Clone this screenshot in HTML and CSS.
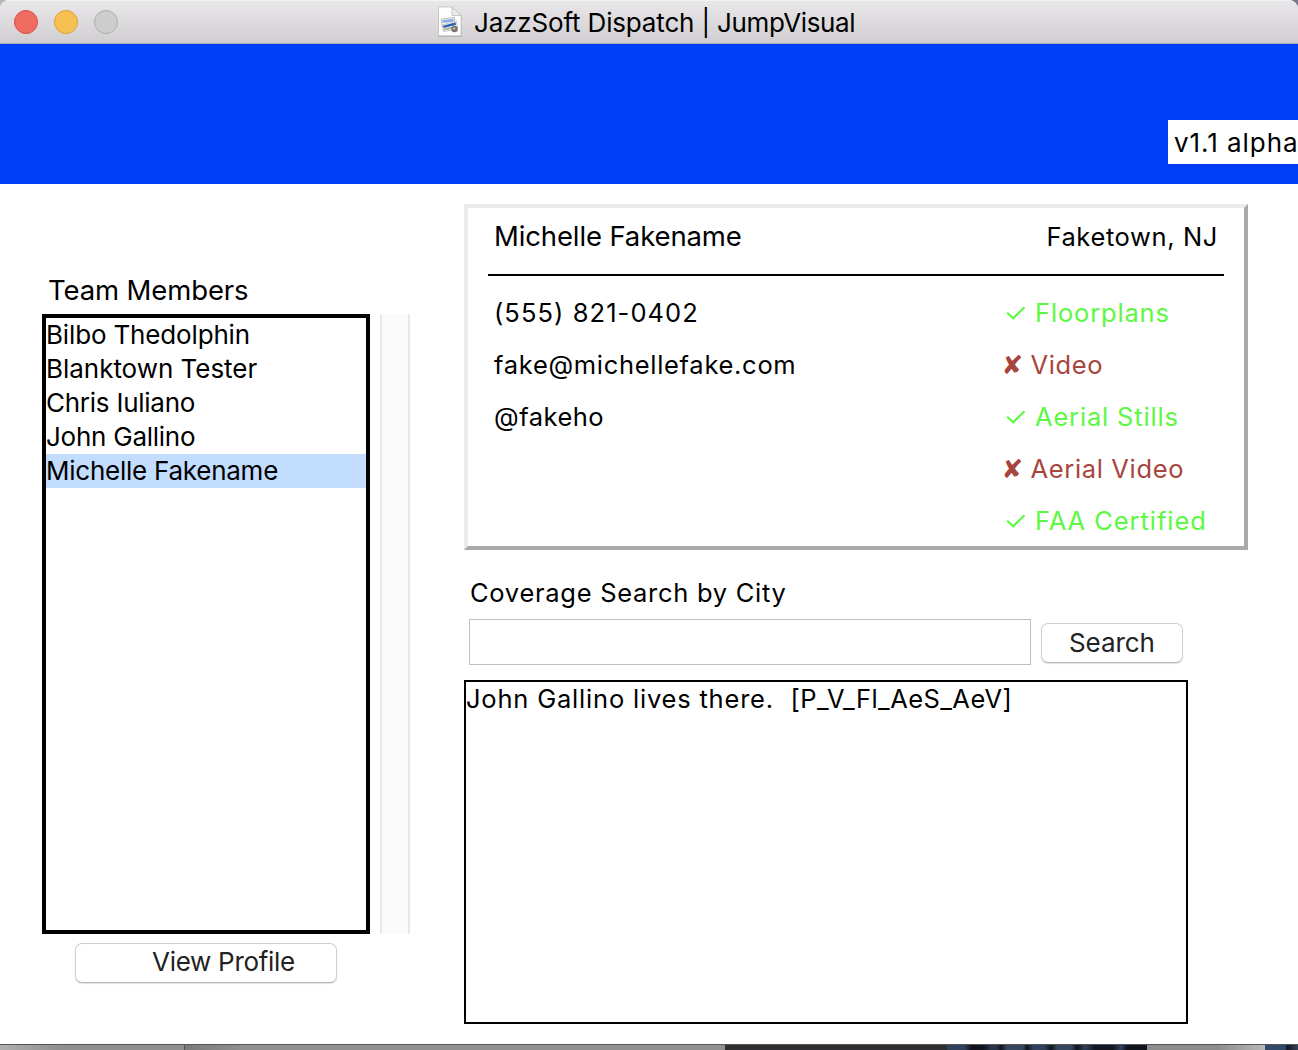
FILE: index.html
```html
<!DOCTYPE html>
<html lang="en">
<head>
<meta charset="utf-8">
<title>JazzSoft Dispatch | JumpVisual</title>
<link rel="stylesheet" href="styles.css">
</head>
<body>
<div class="window">
  <header class="titlebar">
    <div class="lights">
      <span class="light light-close"></span>
      <span class="light light-min"></span>
      <span class="light light-off"></span>
    </div>
    <svg class="doc-icon" width="26" height="32" viewBox="0 0 26 32">
      <path d="M1 1.500H15.500L24.500 10V31H1Z" fill="#a4a4a6" opacity=".7"/>
      <path d="M1.500 1H15L24 9.500V29.800H1.500Z" fill="#fdfdfd" stroke="#c0c0c2" stroke-width=".8"/>
      <path d="M15 1V9.500H24Z" fill="#ececec" stroke="#bdbdbf" stroke-width=".8"/>
      <path d="M4.500 13L17.500 11.500V19L5 21Z" fill="#fff" stroke="#aaa89e" stroke-width=".8"/>
      <path d="M5.500 14L16.500 12.700V15.500L5.500 17Z" fill="#8bb0e8"/>
      <path d="M5 19L19.500 15L20.500 23L6.500 25.500Z" fill="#fff" stroke="#b5b09b" stroke-width=".7"/>
      <path d="M6 19.700L18.700 16.200L19 19L6.500 22Z" fill="#2f62b5"/>
      <path d="M6.700 22.300L15 20.800V23L7 24.500Z" fill="#aeb6a6"/>
      <circle cx="17.500" cy="23" r="3.200" fill="#77716d"/>
      <circle cx="17.200" cy="22.500" r="1.300" fill="#b9b4b0"/>
    </svg>
    <h1 class="title">JazzSoft Dispatch | <span class="product">JumpVisual</span></h1>
  </header>
  <div class="banner"><div class="version">v1.1 alpha</div></div>
  <main class="content">
    <section class="sidebar">
      <h2 class="list-label">Team Members</h2>
      <div class="list-row">
        <ul class="members">
          <li class="member ls-a">Bilbo Thedolphin</li>
          <li class="member ls-b">Blanktown Tester</li>
          <li class="member">Chris Iuliano</li>
          <li class="member">John Gallino</li>
          <li class="member selected">Michelle Fakename</li>
        </ul>
        <div class="scrollbar"></div>
      </div>
      <button class="button view-button">View Profile</button>
    </section>
    <section class="details">
      <article class="card">
        <div class="card-head">
          <span class="name">Michelle Fakename</span>
          <span class="town">Faketown, NJ</span>
        </div>
        <div class="card-body">
          <div class="contact">
            <span class="phone">(555) 821-0402</span>
            <span class="email">fake@michellefake.com</span>
            <span class="handle">@fakeho</span>
          </div>
          <div class="skills">
            <div class="skill yes"><svg class="check" width="20" height="14" viewBox="0 0 20 14"><path d="M1.200 6.700L7.200 12.300L18.500 1.200"/></svg><span>Floorplans</span></div>
            <div class="skill no"><span class="cross">✘</span><span>Video</span></div>
            <div class="skill yes"><svg class="check" width="20" height="14" viewBox="0 0 20 14"><path d="M1.200 6.700L7.200 12.300L18.500 1.200"/></svg><span>Aerial Stills</span></div>
            <div class="skill no"><span class="cross">✘</span><span>Aerial Video</span></div>
            <div class="skill yes wide"><svg class="check" width="20" height="14" viewBox="0 0 20 14"><path d="M1.200 6.700L7.200 12.300L18.500 1.200"/></svg><span>FAA Certified</span></div>
          </div>
        </div>
      </article>
      <label class="search-label" for="city">Coverage Search by City</label>
      <div class="search-row">
        <input class="search-input" id="city" type="text">
        <button class="button search-button">Search</button>
      </div>
      <div class="results"><span>John Gallino lives there.</span><span class="codes">[P_V_Fl_AeS_AeV]</span></div>
    </section>
  </main>
</div>
<div class="desktop">
  <div class="pane pane-left"></div>
  <div class="pane pane-mid"></div>
  <div class="pane pane-dark"></div>
  <div class="pane pane-photo"></div>
  <div class="pane pane-right"></div>
  <div class="pane pane-edge"></div>
</div>
</body>
</html>
```

FILE: styles.css
```css
* { box-sizing: border-box; }
body {
  margin: 0;
  width: 1298px;
  height: 1050px;
  overflow: hidden;
  background: linear-gradient(90deg, #b9b9b9 50%, #77768c 50%);
  font-family: Inter, "Liberation Sans", sans-serif;
  font-size: 25.5px;
  letter-spacing: 0.75px;
  color: #000;
}
h1, h2, ul { margin: 0; padding: 0; font-weight: 400; }

.window {
  height: 1044px;
  border-radius: 9px 9px 0 0;
  background: #fff;
  overflow: hidden;
}
.titlebar {
  display: flex;
  height: 44px;
  padding-left: 14px;
  border-top: 1px solid #f4f3f4;
  border-bottom: 1px solid #aeacae;
  background: linear-gradient(#e9e7e9, #d0ced0);
}
.lights { display: flex; gap: 16px; width: 423px; padding-top: 9px; }
.light { width: 24px; height: 24px; border: 1px solid; border-radius: 50%; }
.light-close { background: #ef6c60; border-color: #dc4b45; }
.light-min { background: #f6c151; border-color: #dfa035; }
.light-off { background: #cdcdcd; border-color: #aeaeae; }
.doc-icon { margin-top: 5px; }
.title {
  padding-left: 11px;
  font-size: 26px;
  line-height: 44px;
  letter-spacing: -0.16px;
  white-space: nowrap;
}
.product { letter-spacing: -0.38px; }

.banner {
  display: flex;
  justify-content: flex-end;
  height: 140px;
  padding-top: 76px;
  background: #003ef8;
}
.version {
  width: 130px;
  height: 44px;
  padding-left: 6px;
  background: #fff;
  font-size: 26px;
  line-height: 46px;
  letter-spacing: 0.95px;
  white-space: nowrap;
}

.content { display: flex; height: 860px; padding-left: 42px; }
.sidebar { width: 422px; padding-top: 82px; }
.list-label {
  height: 48px;
  padding-left: 6px;
  font-size: 27.5px;
  line-height: 48px;
  letter-spacing: -0.12px;
}
.list-row { display: flex; gap: 10px; height: 620px; }
.members {
  width: 328px;
  border: 4px solid #000;
  list-style: none;
  font-size: 26px;
  line-height: 34px;
  letter-spacing: -0.25px;
}
.member { height: 34px; }
.ls-a { letter-spacing: -0.16px; }
.ls-b { letter-spacing: -0.03px; }
.selected { background: #c2ddfd; }
.scrollbar {
  width: 30px;
  border: solid #e8e8e8;
  border-width: 0 2px;
  background: #fafafa;
}
.button {
  display: block;
  height: 40px;
  padding: 0;
  border: 1px solid #cfcfcf;
  border-bottom-color: #b9b9b9;
  border-radius: 7px;
  background: #fff;
  box-shadow: 0 1px 1px rgba(0, 0, 0, 0.12);
  color: #222;
  font-family: inherit;
  font-size: 26px;
  text-align: left;
}
.view-button {
  width: 262px;
  margin: 9px 0 0 33px;
  padding: 0 0 2px 76px;
  line-height: 36px;
  letter-spacing: -0.29px;
}

.details { width: 784px; padding-top: 20px; }
.card {
  height: 346px;
  padding: 0 20px;
  border: 4px solid;
  border-color: #ebebeb #a9a9a9 #a9a9a9 #ebebeb;
}
.card-head {
  display: flex;
  justify-content: space-between;
  height: 68px;
  padding: 0 6px 0 6px;
  border-bottom: 2px solid #000;
  line-height: 56px;
}
.name { font-size: 27.5px; letter-spacing: -0.13px; }
.town { letter-spacing: 0.62px; line-height: 58px; }
.card-body {
  display: flex;
  padding: 11px 0 0 6px;
  line-height: 52px;
}
.contact { display: flex; flex-direction: column; width: 511.5px; }
.phone { letter-spacing: 1.07px; }
.email { letter-spacing: 0.7px; }
.handle { letter-spacing: 0.5px; }
.skill { display: flex; align-items: center; height: 52px; white-space: nowrap; }
.yes { gap: 9.5px; color: #5ef743; letter-spacing: 0.83px; }
.no { color: #a8453c; letter-spacing: 0.65px; }
.wide { letter-spacing: 0.94px; }
.check {
  flex: none;
  fill: none;
  stroke: currentColor;
  stroke-width: 2.2;
}
.cross {
  width: 29px;
  margin-left: -4px;
  font-family: "DejaVu Sans", sans-serif;
  font-size: 26px;
  letter-spacing: 0;
}

.search-label {
  display: block;
  height: 69px;
  padding: 17px 0 0 6px;
  line-height: 52px;
  letter-spacing: 0.715px;
}
.search-row { display: flex; gap: 10px; height: 61px; padding-left: 5px; }
.search-input {
  width: 562px;
  height: 46px;
  padding: 0 8px;
  border: 1px solid #bfbfbf;
  background: #fff;
  font: inherit;
}
.search-button {
  width: 142px;
  margin-top: 4px;
  padding-left: 27px;
  line-height: 38px;
  letter-spacing: -0.08px;
}
.results {
  display: flex;
  width: 724px;
  height: 344px;
  border: 2px solid #000;
  line-height: 34px;
  letter-spacing: 0.8px;
  white-space: nowrap;
}
.results span:first-child { width: 324.500px; }
.codes { letter-spacing: 0.44px; }

.desktop { display: flex; height: 6px; border-top: 1px solid #555; }
.pane { height: 5px; }
.pane-left { width: 185px; background: linear-gradient(90deg, #b0b0b0, #8f8f8f 60px); border-right: 1px solid #555; }
.pane-mid { width: 540px; background: linear-gradient(90deg, #7b7b7b, #909090 60px); }
.pane-dark { width: 222px; background: #2f2f31; }
.pane-photo {
  width: 200px;
  background: linear-gradient(90deg, #2f415b 0 18px, #11131c 24px 36px, #26344a 44px 50px, #11131c 54px, #35465f 60px 76px, #11131c 80px, #2f415b 86px 98px, #11131c 104px, #35465f 110px 124px, #11131c 130px, #2f415b 138px, #141722 148px 166px, #2f415b 174px, #11131c 180px);
}
.pane-right { width: 118px; background: linear-gradient(90deg, #8c8c8c 70px, #b8b8b8); }
.pane-edge { width: 33px; background: linear-gradient(90deg, #34496a 20px, #141722 22px, #34405a); }
```
